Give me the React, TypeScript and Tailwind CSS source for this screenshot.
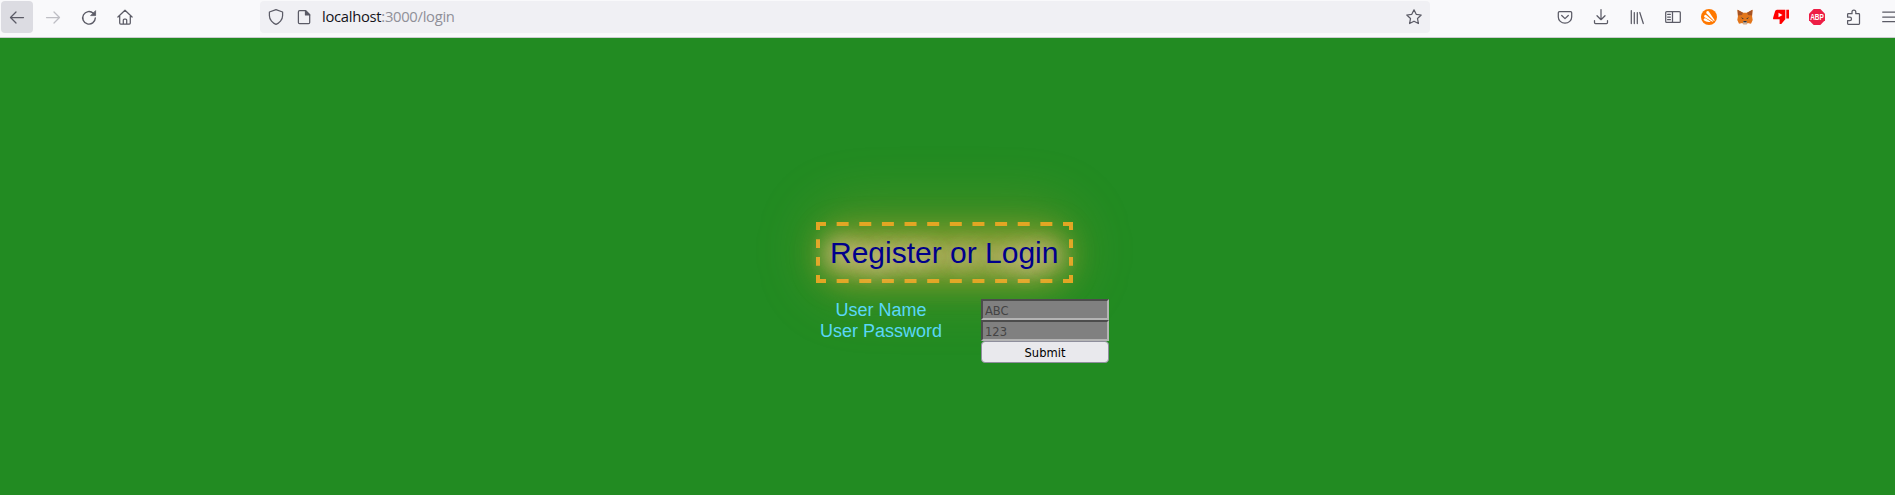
import type { ReactNode } from 'react';

function Icon({ children, className = '' }: { children: ReactNode; className?: string }) {
  return (
    <svg
      viewBox="0 0 16 16"
      className={`h-4 w-4 shrink-0 overflow-visible ${className}`}
      fill="none"
      stroke="currentColor"
      strokeWidth="1.25"
      strokeLinecap="round"
      strokeLinejoin="round"
    >
      {children}
    </svg>
  );
}

function Toolbar() {
  return (
    <header className="flex h-[38px] shrink-0 items-start overflow-hidden border-b border-[#cccccf] bg-[#f9f9fb] pt-px text-[#5b5b66]">
      <div className="flex w-[260px] shrink-0 pl-px">
        <div className="flex h-8 w-8 items-center justify-center rounded bg-[#dcdce2]">
          <Icon><path d="M14.500 8.500H1.700M7 3 1.500 8.500 7 14" /></Icon>
        </div>
        <div className="ml-1 flex h-8 w-8 items-center justify-center text-[#bebec4]">
          <Icon><path d="M1.500 8.500h12.800M9 3l5.500 5.500L9 14" /></Icon>
        </div>
        <div className="ml-1 flex h-8 w-8 items-center justify-center">
          <Icon>
            <path d="M14.300 9A6.300 6.300 0 1 1 12.300 4.200" strokeWidth="1.400" />
            <path d="M14.600 2v4.600H10z" fill="currentColor" strokeWidth="0.800" />
          </Icon>
        </div>
        <div className="ml-1 flex h-8 w-8 items-center justify-center">
          <Icon>
            <path d="M.9 8 8 1.200 15.100 8M2.700 7v7q0 1 1 1h8.600q1 0 1-1V7M6.300 15v-4q0-1 1-1h1.400q1 0 1 1v4" />
          </Icon>
        </div>
      </div>
      <div className="flex h-8 w-[1170px] shrink-0 items-center rounded bg-[#f0f0f4]">
        <Icon className="ml-2"><path d="M8 .7 14.600 3v3.800c0 4-3.400 7.600-6.600 8.600C4.800 14.400 1.400 10.800 1.400 6.800V3z" /></Icon>
        <Icon className="ml-3">
          <path d="M3.600 1.700h6L13.700 5.700V13.500q0 1.200-1.200 1.200H3.600q-1.200 0-1.200-1.200V2.900q0-1.200 1.200-1.200z" />
          <path d="M9.500 1.700v4.200h4.200z" fill="currentColor" />
        </Icon>
        <div className="ml-[10px] flex-1 whitespace-pre pb-0.5 font-['Open_Sans',sans-serif] text-[14.800px] leading-[30px] tracking-[-0.300px] text-[#8f8f98]">
          <span className="text-[#15141a]">localhost</span>:3000/login
        </div>
        <Icon className="mr-2"><path d="m8 .8 2.200 4.500 5 .7-3.700 3.500.9 5L8 12.200l-4.400 2.300.9-5L.8 6l5-.7z" /></Icon>
      </div>
      <div className="ml-[127px] flex h-8 shrink-0 items-center gap-5">
        <Icon><path d="M2.500 2.500h11q1.200 0 1.200 1.200V8a6.700 6.200 0 0 1-13.400 0V3.700q0-1.200 1.200-1.200zM4.700 6.500 8 9.600l3.300-3.100" /></Icon>
        <Icon><path d="M8 .5v9.800M4 6.700l4 4 4-4M1.500 11.500v2q0 1 1 1h11q1 0 1-1v-2" /></Icon>
        <Icon><path d="M2.300 1.500v13M5.300 3.500v11M8.300 3.500v11M10.800 3.500l3.500 11" /></Icon>
        <Icon><path d="M1.700 2.600h12.600q1 0 1 1v8.800q0 1-1 1H1.700q-1 0-1-1V3.600q0-1 1-1zM7.500 2.600v10.800M2.600 5.300h2.800M2.600 8h2.800M2.600 10.700h2.800" /></Icon>
        <Icon>
          <circle cx="8" cy="8" r="8" fill="#ff7800" stroke="none" />
          <g fill="#fff" stroke="none">
            <path d="M5.300 4.300Q4.800 2.400 6.400 2.100q1.200-.1 1.900 1.100L13.500 11q.3.900-.5 1.100z" />
            <path d="M3.200 7.900Q2.600 6.500 4 5.900q1-.3 1.700.6l6.600 5.800q-.3.500-1.300.3z" />
            <path d="M2.800 11.300Q2.100 9.900 3.400 9.400q.8-.3 1.500.2l4.900 3.200Q5.500 13.600 2.800 11.300z" />
          </g>
        </Icon>
        <Icon>
          <g stroke="none">
            <path d="M.5.8 6 3.800h4L15.500.8l-.4 6.700.6 3.500-1.700 3.800-3.300-.8-1 1.200H6.300l-1-1.200-3.300.8L.3 11l.6-3.500z" fill="#e2761b" />
            <path d="M.5.8 6 3.800 5 6 1 6.500zM15.500.8 10 3.800 11 6l4 .5z" fill="#a65324" />
            <path d="m6 13 .5-1h3l.5 1-.3 2.200H6.300z" fill="#c9b5a6" />
            <path d="M3.800 8.300 6.500 9.300 6 10.300zM12.200 8.300 9.500 9.300l.5 1zM6.500 12h3l.2 1.200H6.300z" fill="#28323c" />
          </g>
        </Icon>
        <Icon>
          <g stroke="none">
            <path d="M4 .8h8.300v9.500L8.300 15H6.600V10.300H1Q-.4 10.300.2 8.500L2 2.500Q2.400.8 4 .8zM13.300.8H16v8.700h-2.700z" fill="#f00" />
            <path d="m5.500 3.700 4 2.200-4 2.300z" fill="#fff" />
          </g>
        </Icon>
        <Icon>
          <path d="M4.700 0h6.600L16 4.700v6.600L11.300 16H4.700L0 11.300V4.700z" fill="#ed1e45" stroke="none" />
          <text x="8" y="11" textAnchor="middle" textLength="13.600" lengthAdjust="spacingAndGlyphs" fill="#fff" stroke="none" className="font-['Liberation_Sans',sans-serif] text-[8.500px] font-bold">ABP</text>
        </Icon>
        <Icon className="translate-x-px">
          <path d="M2.300 15.300q-.7 0-.7-.7v-3h2.200a1.700 1.700 0 0 0 0-3.400H1.600V5.500q0-.8.800-.8H6V3a1.900 1.900 0 0 1 3.800 0v1.700h2.900q.8 0 .8.800v9.100q0 .7-.7.700z" />
        </Icon>
        <Icon className="translate-x-px"><path d="M.7 3h15M.7 8h15M.7 12.700h15" /></Icon>
      </div>
    </header>
  );
}

function DashedFrame() {
  return (
    <svg className="absolute inset-0 h-[61px] w-[257px]" viewBox="0 0 257 61" fill="none" stroke="#e2a623" strokeWidth="4">
      <path d="M0 2h10M247 2h10M0 59h10M247 59h10M2 0v8M2 53v8M255 0v8M255 53v8" />
      <path d="M20.640 2H246M20.640 59H246" strokeDasharray="12 10.636" />
      <path d="M2 17.200V52M255 17.200V52" strokeDasharray="8.700 9.200" />
    </svg>
  );
}

export default function App() {
  return (
    <div className="flex h-[495px] w-[1895px] flex-col overflow-hidden bg-[#228b22] font-['Liberation_Sans',sans-serif]">
      <Toolbar />
      <main className="flex flex-1 flex-col pl-[816px] pt-[184px]">
        <div className="relative h-[61px] w-[257px] shrink-0">
          <div className="absolute -inset-x-2 -bottom-4 -top-5 rounded-full bg-[#c09a28]/24 blur-[26px]" />
          <div className="absolute inset-x-1 bottom-0 top-1.5 rounded-3xl bg-[#c4aa38]/50 blur-[14px]" />
          <DashedFrame />
          <h1 className="relative whitespace-nowrap pl-[14px] pt-[14px] text-[30px] leading-[33px] text-[#00008b] [text-shadow:0_2px_22px_#ffd2cb,0_2px_22px_#ffd2b0]">
            Register or Login
          </h1>
        </div>
        <form className="relative mt-4 flex" onSubmit={(e) => e.preventDefault()}>
          <div className="flex w-[130px] flex-col whitespace-nowrap pt-px text-center text-[18px] leading-[21px] text-[#5bd7f7]">
            <label>User Name</label>
            <label>User Password</label>
          </div>
          <div className="ml-[35px] flex w-32 flex-col font-['DejaVu_Sans_Condensed','DejaVu_Sans',sans-serif] text-[12.800px]">
            <input placeholder="ABC" className="h-[21px] border-2 border-b-[#b4b4b4] border-l-[#4c4c4c] border-r-[#b4b4b4] border-t-[#4c4c4c] bg-[#808080] px-[2px] pt-[2px] placeholder:text-[#444444]" />
            <input placeholder="123" className="h-[21px] border-2 border-b-[#b4b4b4] border-l-[#4c4c4c] border-r-[#b4b4b4] border-t-[#4c4c4c] bg-[#808080] px-[2px] pt-[2px] placeholder:text-[#444444]" />
            <button className="h-[22px] rounded border border-[#8f8f9d] bg-[#e9e9ed] pt-px leading-[20px] text-black">Submit</button>
          </div>
        </form>
      </main>
    </div>
  );
}
